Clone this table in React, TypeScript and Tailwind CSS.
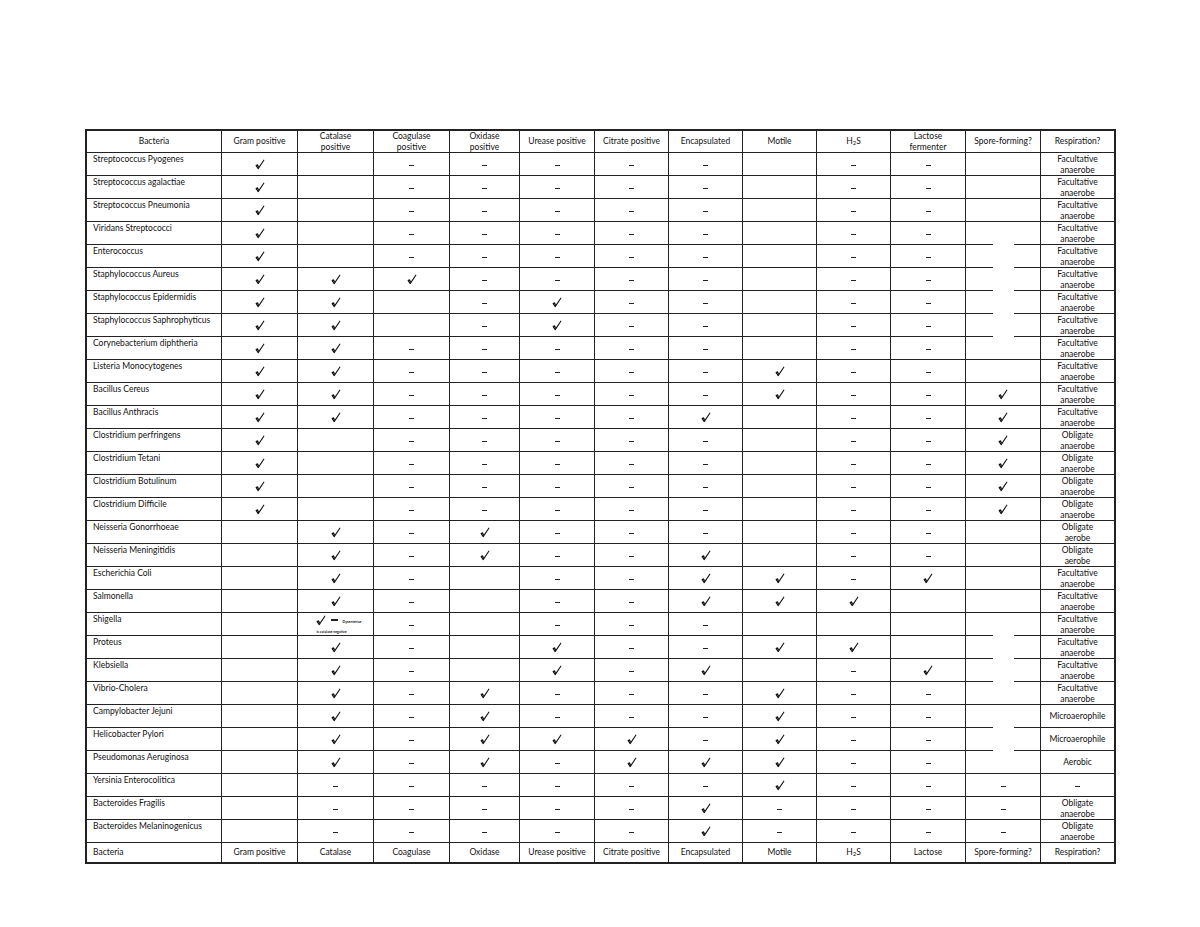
import React from 'react'

const cols = "grid grid-cols-[135px_76px_76px_76px_70px_75px_74px_74px_74px_74px_75px_75px_73px]"

const Check = () => (
    <svg width="10" height="11" viewBox="0 0 10 11" className="block">
        <path d="M1.2 6.6 L3.2 9.6 L8.8 1.2" fill="none" stroke="#111" strokeWidth="1.1" strokeLinecap="round" strokeLinejoin="round" />
        <path d="M1.4 6.4 L2.6 6.0 L3.4 8.0" fill="none" stroke="#111" strokeWidth="1.3" strokeLinecap="round" />
    </svg>
)

const Dash = () => <div className="w-[5px] h-[1.5px] bg-[#222] mt-[3px]" />

const headers: React.ReactNode[] = [
    "Bacteria", "Gram positive", <>Catalase<br />positive</>, <>Coagulase<br />positive</>, <>Oxidase<br />positive</>,
    "Urease positive", "Citrate positive", "Encapsulated", "Motile", <>H<sub className="text-[6px]">2</sub>S</>,
    <>Lactose<br />fermenter</>, "Spore-forming?", "Respiration?",
]

const footers: React.ReactNode[] = [
    "Bacteria", "Gram positive", "Catalase", "Coagulase", "Oxidase", "Urease positive", "Citrate positive",
    "Encapsulated", "Motile", <>H<sub className="text-[6px]">2</sub>S</>, "Lactose", "Spore-forming?", "Respiration?",
]

const FA = ["Facultative", "anaerobe"]
const OA = ["Obligate", "anaerobe"]

const rows: [string, string, string[]][] = [
    ["Streptococcus Pyogenes", "c_-----_--_", FA],
    ["Streptococcus agalactiae", "c_-----_--_", FA],
    ["Streptococcus Pneumonia", "c_-----_--_", FA],
    ["Viridans Streptococci", "c_-----_--_", FA],
    ["Enterococcus", "c_-----_--_", FA],
    ["Staphylococcus Aureus", "ccc----_--_", FA],
    ["Staphylococcus Epidermidis", "cc_-c--_--_", FA],
    ["Staphylococcus Saphrophyticus", "cc_-c--_--_", FA],
    ["Corynebacterium diphtheria", "cc-----_--_", FA],
    ["Listeria Monocytogenes", "cc-----c--_", FA],
    ["Bacillus Cereus", "cc-----c--c", FA],
    ["Bacillus Anthracis", "cc----c_--c", FA],
    ["Clostridium perfringens", "c_-----_--c", OA],
    ["Clostridium Tetani", "c_-----_--c", OA],
    ["Clostridium Botulinum", "c_-----_--c", OA],
    ["Clostridium Difficile", "c_-----_--c", OA],
    ["Neisseria Gonorrhoeae", "_c-c---_--_", ["Obligate", "aerobe"]],
    ["Neisseria Meningitidis", "_c-c--c_--_", ["Obligate", "aerobe"]],
    ["Escherichia Coli", "_c-_--cc-c_", FA],
    ["Salmonella", "_c-_--ccc__", FA],
    ["Shigella", "_S-_---____", FA],
    ["Proteus", "_c-_c--cc__", FA],
    ["Klebsiella", "_c-_c-c_-c_", FA],
    ["Vibrio-Cholera", "_c-c---c--_", FA],
    ["Campylobacter Jejuni", "_c-c---c--_", ["Microaerophile"]],
    ["Helicobacter Pylori", "_c-ccc-c--_", ["Microaerophile"]],
    ["Pseudomonas Aeruginosa", "_c-c-ccc--_", ["Aerobic"]],
    ["Yersinia Enterocolitica", "_------c---", ["-"]],
    ["Bacteroides Fragilis", "_-----c----", OA],
    ["Bacteroides Melaninogenicus", "_-----c----", OA],
]

// rows whose bottom line in the spore column has a gap in the middle
const brokenSpore = [3, 4, 5, 6, 7, 20, 21, 22, 24, 25]

const Mark = ({ k }: { k: string }) => {
    if (k === 'c') return <Check />
    if (k === '-') return <Dash />
    if (k === 'S') {
        return (
            <div className="flex flex-col items-center">
                <div className="flex items-center gap-[5px] ml-[6px]">
                    <Check />
                    <div className="w-[7px] h-[1.5px] bg-[#222]" />
                    <span className="text-[3.5px] leading-[4px] font-bold mt-[3px]">Dysenteriae</span>
                </div>
                <span className="text-[3.5px] leading-[4px] font-bold mt-[4px] -ml-[8px]">is catalase negative</span>
            </div>
        )
    }
    return null
}

const App = () => {
    return (
        <div className="w-[1200px] h-[927px] bg-white pt-[129px] pl-[85px] font-['Lato','Liberation_Sans',sans-serif] text-[#111] text-[8.5px]">
            <div className="w-[1031px] border-2 border-[#222]">
                <div className={cols}>
                    {headers.map((h, i) => (
                        <div key={i} className={`h-[22px] border-b border-[#222] flex items-center justify-center text-center leading-[11px] ${i < 12 ? 'border-r' : ''}`}>
                            {h}
                        </div>
                    ))}
                </div>
                {rows.map(([name, marks, resp], r) => (
                    <div key={r} className={cols}>
                        <div className="h-[23px] border-r border-b border-[#222] pl-[6px] pt-[1px] leading-[10px]">{name}</div>
                        {marks.split('').map((k, i) => {
                            const broken = i === 10 && brokenSpore.includes(r)
                            return (
                                <div key={i} className={`h-[23px] border-r border-[#222] flex flex-col ${broken ? '' : 'border-b'}`}>
                                    <div className="flex-1 flex items-center justify-center">
                                        <Mark k={k} />
                                    </div>
                                    {broken && (
                                        <div className="flex h-px">
                                            <div className="flex-1 bg-[#222]" />
                                            <div className="w-[21px]" />
                                            <div className="flex-1 bg-[#222]" />
                                        </div>
                                    )}
                                </div>
                            )
                        })}
                        <div className={`h-[23px] border-b border-[#222] flex flex-col items-center text-center leading-[11px] ${resp.length > 1 ? 'justify-start pt-[1px]' : 'justify-center'}`}>
                            {resp.map((t, j) => t === '-' ? <Dash key={j} /> : <span key={j}>{t}</span>)}
                        </div>
                    </div>
                ))}
                <div className={cols}>
                    {footers.map((f, i) => (
                        <div key={i} className={`h-[19px] flex items-center leading-[11px] ${i === 0 ? 'pl-[6px]' : 'justify-center'} ${i < 12 ? 'border-r border-[#222]' : ''}`}>
                            {f}
                        </div>
                    ))}
                </div>
            </div>
        </div>
    )
}

export default App
